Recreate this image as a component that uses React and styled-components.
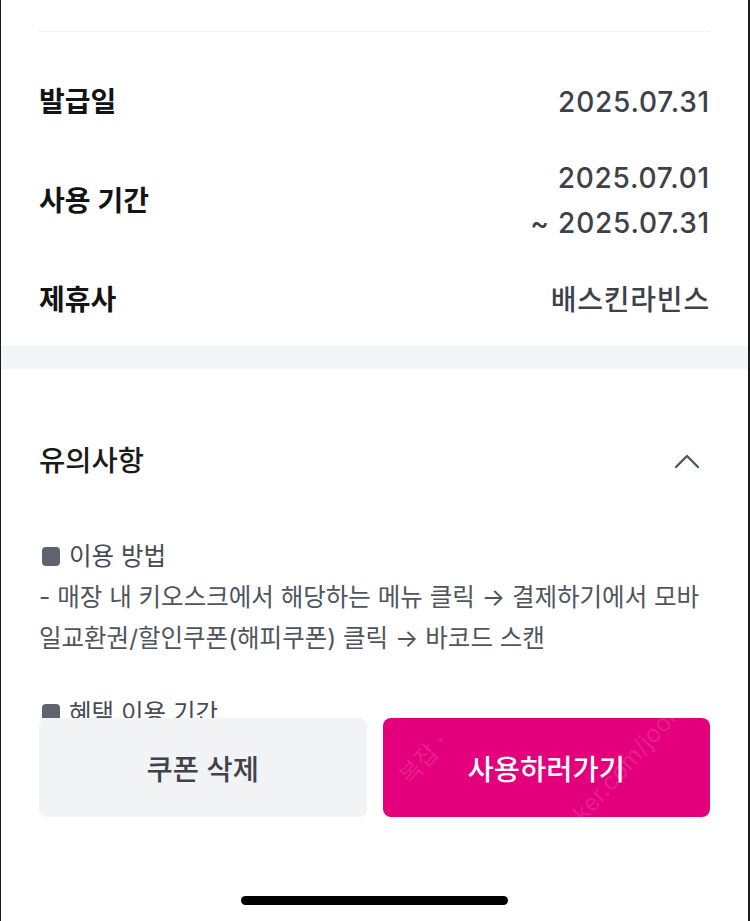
import React from "react";
import styled, { createGlobalStyle } from "styled-components";

const GlobalStyle = createGlobalStyle`
  html, body { margin: 0; padding: 0; background: #fff; }
  body {
    font-family: Inter, "Noto Sans CJK KR", "Noto Sans", sans-serif;
    -webkit-font-smoothing: antialiased;
  }
  * { box-sizing: border-box; }
`;

const Frame = styled.div`
  width: 750px;
  height: 921px;
  border-left: 1px solid #1c1c1c;
  border-right: 2px solid #1c1c1c;
  display: flex;
  flex-direction: column;
  overflow: hidden;
  background: #fff;
`;

const Scroll = styled.div`
  flex: 1;
  min-height: 0;
  overflow: hidden;
`;

const InfoSection = styled.section`
  padding: 0 38px;
`;

const Divider = styled.div`
  margin-top: 31px;
  height: 1px;
  background: #eef0f2;
`;

const InfoList = styled.div`
  display: flex;
  flex-direction: column;
  gap: 34px;
  padding: 50px 0 26px;
`;

const Row = styled.div`
  display: flex;
  justify-content: space-between;
  align-items: center;
`;

const Label = styled.div`
  font-size: 28px;
  font-weight: 600;
  color: #141414;
  line-height: 40px;
`;

const Value = styled.div`
  font-size: 28px;
  font-weight: 500;
  letter-spacing: 0.8px;
  color: #3d424a;
  line-height: ${(p) => (p.$multi ? "45px" : "40px")};
  text-align: right;
`;

const Band = styled.div`
  height: 23px;
  background: #f4f5f7;
`;

const NoticeSection = styled.section`
  padding: 72px 38px 0;
`;

const NoticeHeader = styled.div`
  display: flex;
  justify-content: space-between;
  align-items: center;
  height: 40px;
`;

const NoticeTitle = styled.h2`
  margin: 0;
  font-size: 28.5px;
  font-weight: 500;
  color: #1a1a1a;
  line-height: 40px;
`;

const ChevronBtn = styled.span`
  display: flex;
  margin-right: 10px;
`;

const NoticeBody = styled.div`
  margin-top: 55px;
`;

const Block = styled.div`
  & + & {
    margin-top: 34px;
  }
`;

const SubHeading = styled.div`
  display: flex;
  align-items: center;
  gap: 9px;
  font-size: 24.5px;
  line-height: 41px;
  color: #464c54;
`;

const Square = styled.span`
  display: inline-block;
  width: 18px;
  height: 19px;
  border-radius: 4px;
  background: #5d646d;
  margin-left: 3px;
`;

const Paragraph = styled.p`
  margin: 0;
  font-size: 24.5px;
  line-height: 41px;
  color: #4f555d;
`;

const Bottom = styled.div`
  flex: none;
  background: #fff;
`;

const Buttons = styled.div`
  display: grid;
  grid-template-columns: 1fr 1fr;
  gap: 16px;
  padding: 0 38px;
`;

const Button = styled.button`
  position: relative;
  overflow: hidden;
  height: 99px;
  border: none;
  border-radius: 8px;
  font-family: inherit;
  font-size: 28.5px;
  font-weight: 500;
  background: ${(p) => (p.$primary ? "#e4007d" : "#f2f3f5")};
  color: ${(p) => (p.$primary ? "#ffffff" : "#3f444b")};
  display: flex;
  align-items: center;
  justify-content: center;
`;

const Watermark = styled.span`
  position: absolute;
  font-size: 24px;
  font-weight: 400;
  color: rgba(255, 255, 255, 0.13);
  transform: rotate(-48deg);
  white-space: nowrap;
  pointer-events: none;
  left: ${(p) => p.$x}px;
  top: ${(p) => p.$y}px;
`;

const HomeArea = styled.div`
  height: 104px;
  display: flex;
  justify-content: center;
  align-items: flex-end;
  padding-bottom: 16px;
`;

const HomeIndicator = styled.div`
  width: 267px;
  height: 9px;
  border-radius: 5px;
  background: #000;
`;

export default function App() {
  return (
    <>
      <GlobalStyle />
      <Frame>
        <Scroll>
          <InfoSection>
            <Divider />
            <InfoList>
              <Row>
                <Label>발급일</Label>
                <Value>2025.07.31</Value>
              </Row>
              <Row>
                <Label>사용 기간</Label>
                <Value $multi>
                  2025.07.01
                  <br />~ 2025.07.31
                </Value>
              </Row>
              <Row>
                <Label>제휴사</Label>
                <Value>배스킨라빈스</Value>
              </Row>
            </InfoList>
          </InfoSection>
          <Band />
          <NoticeSection>
            <NoticeHeader>
              <NoticeTitle>유의사항</NoticeTitle>
              <ChevronBtn>
                <svg width="26" height="16" viewBox="0 0 26 16" fill="none">
                  <polyline
                    points="2,14 13,3 24,14"
                    stroke="#50565e"
                    strokeWidth="2.4"
                    strokeLinecap="round"
                    strokeLinejoin="round"
                  />
                </svg>
              </ChevronBtn>
            </NoticeHeader>
            <NoticeBody>
              <Block>
                <SubHeading>
                  <Square />
                  이용 방법
                </SubHeading>
                <Paragraph>
                  - 매장 내 키오스크에서 해당하는 메뉴 클릭 → 결제하기에서 모바일교환권/할인쿠폰(해피쿠폰) 클릭 → 바코드 스캔
                </Paragraph>
              </Block>
              <Block>
                <SubHeading>
                  <Square />
                  혜택 이용 기간
                </SubHeading>
                <Paragraph>- 발급일로부터 30일 이내 사용 가능</Paragraph>
              </Block>
            </NoticeBody>
          </NoticeSection>
        </Scroll>
        <Bottom>
          <Buttons>
            <Button>쿠폰 삭제</Button>
            <Button $primary>
              <Watermark $x={10} $y={22}>복잡 ·</Watermark>
              <Watermark $x={170} $y={30}>ker.com/joon</Watermark>
              사용하러가기
            </Button>
          </Buttons>
          <HomeArea>
            <HomeIndicator />
          </HomeArea>
        </Bottom>
      </Frame>
    </>
  );
}
